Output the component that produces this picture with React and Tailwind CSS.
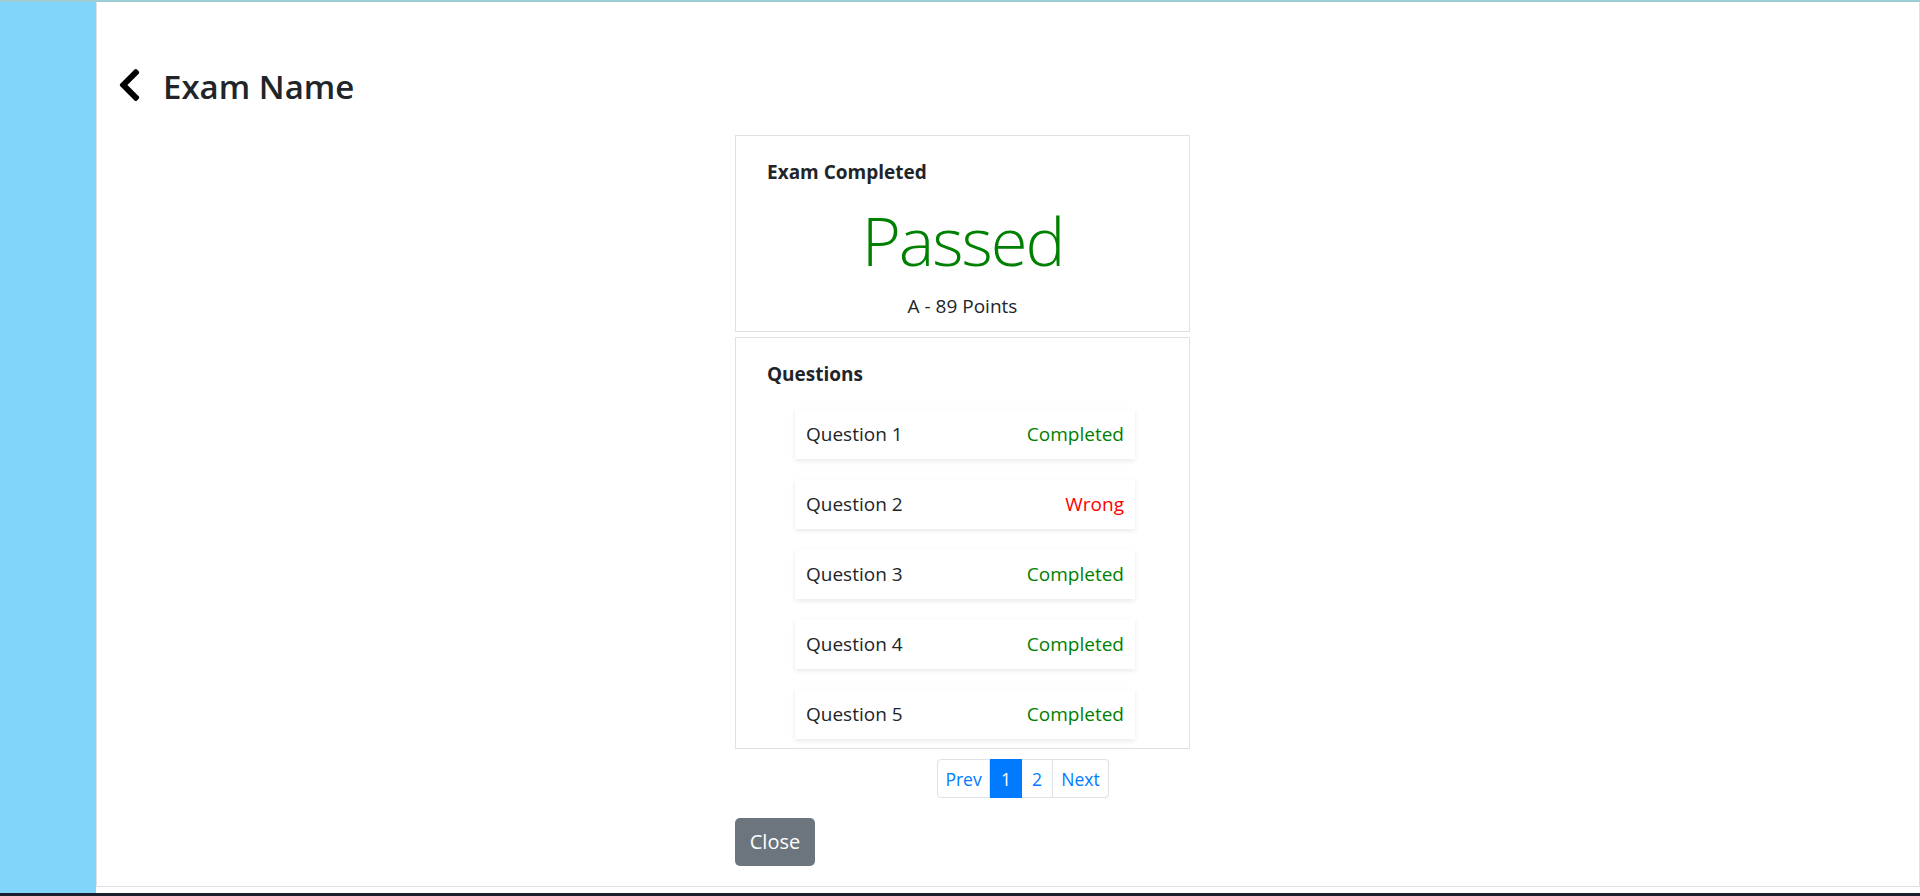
import React from 'react';

const questions = [
  { name: 'Question 1', status: 'Completed' },
  { name: 'Question 2', status: 'Wrong' },
  { name: 'Question 3', status: 'Completed' },
  { name: 'Question 4', status: 'Completed' },
  { name: 'Question 5', status: 'Completed' },
];

const ChevronLeft = () => (
  <svg width="21" height="32" viewBox="27 37 266 438" fill="#000">
    <path d="M34.52 239.03L228.87 44.69c9.37-9.37 24.57-9.37 33.94 0l22.67 22.67c9.36 9.36 9.37 24.52.04 33.9L131.49 256l154.02 154.75c9.34 9.38 9.32 24.54-.04 33.9l-22.67 22.67c-9.37 9.37-24.57 9.37-33.94 0L34.52 272.97c-9.37-9.37-9.37-24.57 0-33.94z" />
  </svg>
);

const App = () => {
  return (
    <div className="w-full h-[896px] flex flex-col bg-white font-['Open_Sans',sans-serif] text-[#212529]">
      {/* top strip */}
      <div className="h-[2px] bg-[#9fcdd6]"></div>

      <div className="flex h-[891px]">
        {/* Sidebar */}
        <div className="w-[96px] bg-[#81d4fa]"></div>

        {/* Main */}
        <div className="flex-1 flex flex-col">
          <div className="h-[885px] border-l border-r border-b border-[#dee2e6]">
            {/* Header */}
            <div className="mt-[59px] h-[48px] flex items-center pl-[22px] gap-[23px]">
              <ChevronLeft />
              <h2 className="text-[33px] leading-[48px] font-semibold text-[#212529] pt-[3px]">Exam Name</h2>
            </div>

            <div className="ml-[638px] mt-[26px] w-[455px]">
              {/* Result card */}
              <div className="border border-[#dee2e6] pt-[24px] pb-[10px] px-[31px]">
                <h5 className="text-[19px] leading-[24px] font-bold">Exam Completed</h5>
                <div className="mt-[13px] text-center text-[67px] leading-[86px] font-light tracking-[-0.03em] text-[#008000]">
                  Passed
                </div>
                <div className="mt-[8px] text-center text-[19px] leading-[30px]">A - 89 Points</div>
              </div>

              {/* Questions card */}
              <div className="mt-[5px] border border-[#dee2e6] pt-[24px] pb-[9px]">
                <h5 className="px-[31px] text-[19px] leading-[24px] font-bold">Questions</h5>
                <div className="mt-[23px] ml-[59px] w-[340px] flex flex-col gap-[20px]">
                  {questions.map((q) => (
                    <div
                      key={q.name}
                      className="h-[50px] flex items-center justify-between px-[11px] bg-white shadow-[0_2px_5px_rgba(0,0,0,0.09)] text-[19px] leading-[30px]"
                    >
                      <span>{q.name}</span>
                      <span className={q.status === 'Wrong' ? 'text-[#ff0000]' : 'text-[#008000]'}>
                        {q.status}
                      </span>
                    </div>
                  ))}
                </div>
              </div>

              {/* Pagination */}
              <div className="mt-[10px] ml-[202px] flex text-[17.5px] leading-[26px] text-[#007bff]">
                <div className="w-[53px] h-[39px] flex items-center justify-center border border-[#dee2e6] rounded-l-[4px]">Prev</div>
                <div className="w-[32px] h-[39px] flex items-center justify-center bg-[#007bff] text-white border-y border-[#007bff]">1</div>
                <div className="w-[31px] h-[39px] flex items-center justify-center border-y border-r border-[#dee2e6]">2</div>
                <div className="w-[56px] h-[39px] flex items-center justify-center border-y border-r border-[#dee2e6] rounded-r-[4px]">Next</div>
              </div>

              {/* Close */}
              <button className="mt-[20px] w-[80px] h-[48px] rounded-[5px] bg-[#6c757d] text-white text-[20px] leading-[30px]">
                Close
              </button>
            </div>
          </div>
        </div>
      </div>

      {/* bottom strip */}
      <div className="h-[3px] bg-[#1b1f2d]"></div>
    </div>
  );
};

export default App;
